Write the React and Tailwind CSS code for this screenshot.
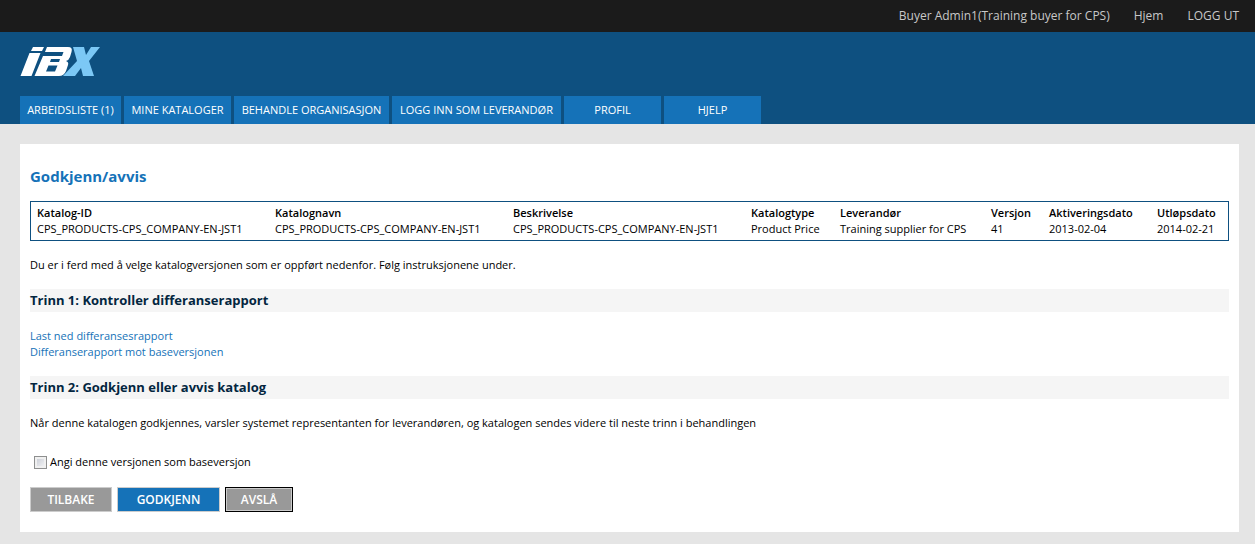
const tabs = [
  ['ARBEIDSLISTE (1)', 'min-w-[101px]'],
  ['MINE KATALOGER', 'min-w-[107px]'],
  ['BEHANDLE ORGANISASJON', 'min-w-[155px]'],
  ['LOGG INN SOM LEVERANDØR', 'min-w-[169px]'],
  ['PROFIL', 'min-w-[97px]'],
  ['HJELP', 'min-w-[97px]'],
];

const columns = [
  ['Katalog-ID', 'CPS_PRODUCTS-CPS_COMPANY-EN-JST1', ''],
  ['Katalognavn', 'CPS_PRODUCTS-CPS_COMPANY-EN-JST1', ''],
  ['Beskrivelse', 'CPS_PRODUCTS-CPS_COMPANY-EN-JST1', ''],
  ['Katalogtype', 'Product Price', 'w-[89px]'],
  ['Leverandør', 'Training supplier for CPS', 'w-[151px]'],
  ['Versjon', '41', 'w-[58px]'],
  ['Aktiveringsdato', '2013-02-04', 'w-[108px]'],
  ['Utløpsdato', '2014-02-21', 'w-[77px]'],
];

function Logo() {
  return (
    <svg role="img" aria-label="IBX" width="80" height="32" viewBox="0 0 80 32">
      <path fill="#fff" d="M13 1h11l-2 4H11zM9.500 7h11L11.500 30H0.500z" />
      <path
        fill="#fff"
        fillRule="evenodd"
        d="M27 1h21q5 0 3.500 5l-1.500 5q-1 3-4 4 3 1 2 4l-2 6q-2 5-7 5H14.500l8.500-20h19l1.500-4H25zM31 13l-1 3h9l1-3zM28.500 19.500l-2.500 6h9l2.500-6z"
      />
      <path fill="#7cc8f5" d="M53 1h11l2 8 5-8h9L69 15l5 15H63l-2-8-6 8H43l14-15z" />
    </svg>
  );
}

function StepHeading({ children }) {
  return <h2 className="bg-[#f5f5f5] text-[13px] leading-[23px] font-bold text-[#03263f]">{children}</h2>;
}

export default function App() {
  return (
    <div className="min-h-screen bg-[#e5e5e5] pb-3 font-['Open_Sans','Noto_Sans',sans-serif] text-[11px] leading-4 text-black">
      <div className="flex h-8 items-center justify-end gap-6 bg-[#1b1b1b] pr-4 text-xs text-[#c8c8c8]">
        <span>Buyer Admin1(Training buyer for CPS)</span>
        <a href="#hjem">Hjem</a>
        <a href="#logg-ut">LOGG UT</a>
      </div>
      <header className="bg-[#0e5080] pl-5">
        <div className="flex h-16 items-start pt-[14px]">
          <Logo />
        </div>
        <nav className="flex gap-[3px]">
          {tabs.map(([label, width]) => (
            <a
              key={label}
              href="#meny"
              className={`${width} bg-[#1572b8] text-center leading-7 whitespace-nowrap text-white`}
            >
              {label}
            </a>
          ))}
        </nav>
      </header>
      <main className="mt-5 mr-4 ml-5 bg-white px-[10px] py-5">
        <h1 className="text-[15px] leading-6 font-bold text-[#1572b8]">Godkjenn/avvis</h1>
        <div className="mt-[13px] border border-[#0e5080] py-[3px]">
          <table className="w-full table-fixed text-left">
            <thead>
              <tr>
                {columns.map(([name, , width]) => (
                  <th key={name} className={`${width} pl-[6px] font-semibold whitespace-nowrap`}>
                    {name}
                  </th>
                ))}
              </tr>
            </thead>
            <tbody>
              <tr>
                {columns.map(([name, value]) => (
                  <td key={name} className="pl-[6px] whitespace-nowrap">
                    {value}
                  </td>
                ))}
              </tr>
            </tbody>
          </table>
        </div>
        <p className="my-4">
          Du er i ferd med å velge katalogversjonen som er oppført nedenfor. Følg instruksjonene under.
        </p>
        <StepHeading>Trinn 1: Kontroller differanserapport</StepHeading>
        <ul className="my-4 text-[#1572b8]">
          <li>
            <a href="#differanserapport">Last ned differansesrapport</a>
          </li>
          <li>
            <a href="#baseversjon">Differanserapport mot baseversjonen</a>
          </li>
        </ul>
        <StepHeading>Trinn 2: Godkjenn eller avvis katalog</StepHeading>
        <p className="mt-4">
          Når denne katalogen godkjennes, varsler systemet representanten for leverandøren, og katalogen sendes videre
          til neste trinn i behandlingen
        </p>
        <div className="mt-[23px] flex items-center gap-[3px] pl-1">
          <input
            id="base"
            type="checkbox"
            className="size-[13px] appearance-none border border-[#8e8f8f] bg-linear-to-br from-[#c4c8d2] to-[#f8f8f8] inset-ring-2 inset-ring-[#f0f0f0] checked:from-[#1572b8]"
          />
          <label htmlFor="base">Angi denne versjonen som baseversjon</label>
        </div>
        <div className="mt-[17px] flex gap-[5px] text-xs font-semibold text-white">
          <button type="button" className="h-[25px] w-[82px] border border-[#cccccc] bg-[#999999]">
            TILBAKE
          </button>
          <button type="button" className="h-[25px] w-[103px] border border-[#cccccc] bg-[#1572b8]">
            GODKJENN
          </button>
          <button type="button" className="h-[25px] w-[68px] border border-black bg-[#999999] inset-ring inset-ring-[#cccccc]">
            AVSLÅ
          </button>
        </div>
      </main>
    </div>
  );
}
